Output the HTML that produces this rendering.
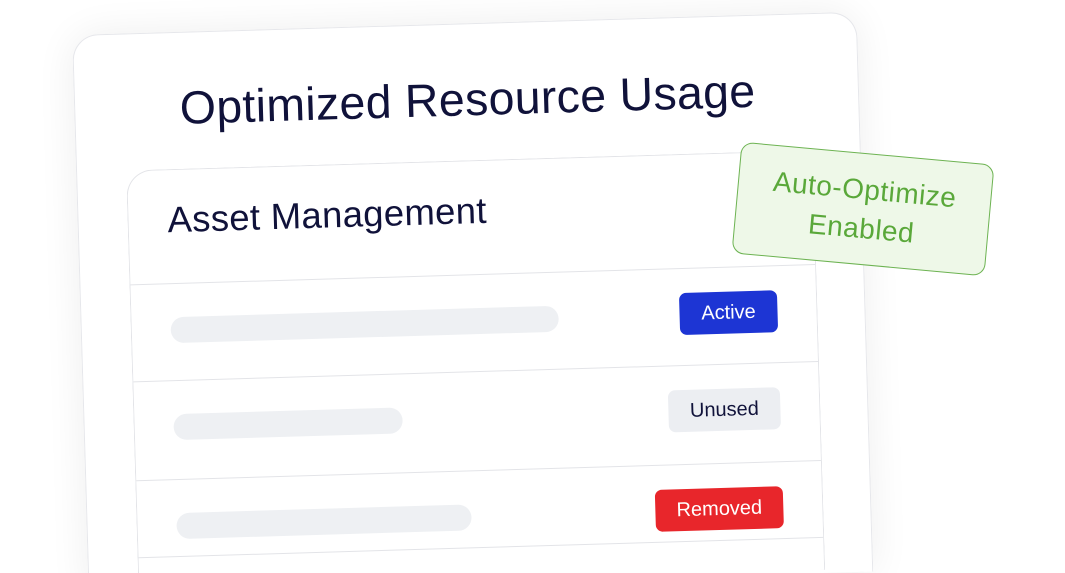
<!DOCTYPE html>
<html><head><meta charset="utf-8"><style>
html,body{margin:0;padding:0;width:1065px;height:573px;overflow:hidden;}
body{background:#fff;position:relative;font-family:"Liberation Sans",sans-serif;}
.outer{position:absolute;left:72px;top:35px;width:785px;height:560px;background:#fff;border:1px solid #e6e7eb;border-bottom:none;border-radius:26px 26px 0 0;transform-origin:0 0;transform:rotate(-1.7deg);box-shadow:0 0 40px rgba(0,0,0,0.07);box-sizing:border-box;}
.title{position:absolute;left:0;width:785px;top:48px;text-align:center;font-size:46.5px;color:#10123a;letter-spacing:0.3px;}
.inner{position:absolute;left:49px;top:136px;width:687px;height:420px;border:1px solid #e3e4e8;border-bottom:none;border-radius:26px 26px 0 0;box-sizing:border-box;}
.head{height:113px;border-bottom:1.5px solid #e3e4e8;position:relative;}
.head span{position:absolute;left:39px;top:29px;font-size:36.5px;color:#10123a;letter-spacing:0.3px;}
.row{height:96px;border-bottom:1.5px solid #e3e4e8;position:relative;}
.bar{position:absolute;left:39px;top:33px;height:26px;border-radius:13px;background:#eef0f3;}
.badge{position:absolute;right:39px;top:24px;height:42px;border-radius:7px;font-size:20px;line-height:42px;text-align:center;}
.green{position:absolute;left:736px;top:153px;width:254px;height:112px;box-sizing:border-box;border:1.5px solid #6db352;background:#eef8e8;border-radius:12px;transform:rotate(5.2deg);color:#5aa83a;font-size:28px;text-align:center;line-height:39px;padding-top:16px;letter-spacing:0.5px;}
</style></head><body>
<div class="outer">
  <div class="title">Optimized Resource Usage</div>
  <div class="inner">
    <div class="head"><span>Asset Management</span></div>
    <div class="row"><div class="bar" style="width:388px"></div><div class="badge" style="width:98px;background:#1d35d4;color:#fff;">Active</div></div>
    <div class="row" style="height:98px"><div class="bar" style="width:229px"></div><div class="badge" style="width:112px;background:#eceef2;color:#10123a;">Unused</div></div>
    <div class="row" style="height:76px"><div class="bar" style="width:295px"></div><div class="badge" style="width:128px;background:#e8262b;color:#fff;">Removed</div></div>
  </div>
</div>
<div class="green">Auto-Optimize<br>Enabled</div>
</body></html>
